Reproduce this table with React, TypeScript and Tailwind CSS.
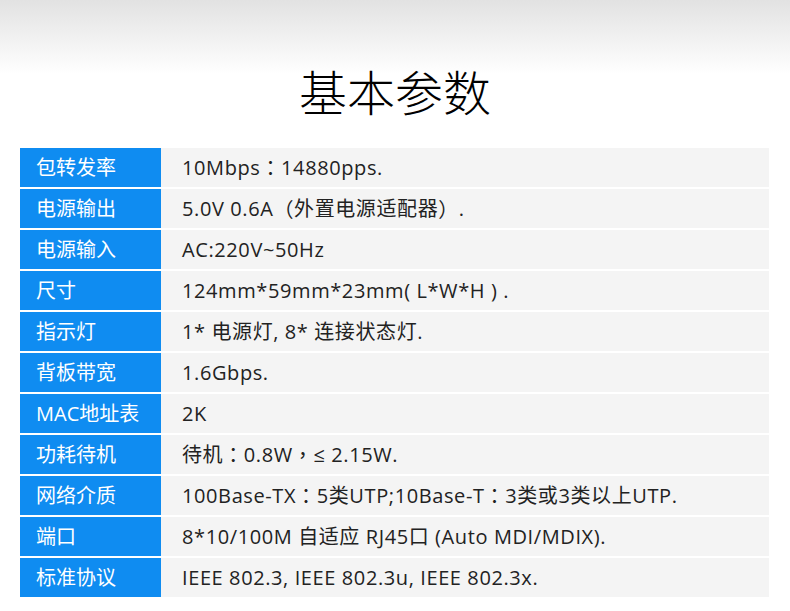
import React from "react";

const rows: [string, string][] = [
  ["包转发率", "10Mbps：14880pps."],
  ["电源输出", "5.0V 0.6A（外置电源适配器）."],
  ["电源输入", "AC:220V~50Hz"],
  ["尺寸", "124mm*59mm*23mm( L*W*H ) ."],
  ["指示灯", "1* 电源灯, 8* 连接状态灯."],
  ["背板带宽", "1.6Gbps."],
  ["MAC地址表", "2K"],
  ["功耗待机", "待机：0.8W，≤ 2.15W."],
  ["网络介质", "100Base-TX：5类UTP;10Base-T：3类或3类以上UTP."],
  ["端口", "8*10/100M 自适应 RJ45口 (Auto MDI/MDIX)."],
  ["标准协议", "IEEE 802.3, IEEE 802.3u, IEEE 802.3x."],
];

function Value({ text }: { text: string }) {
  const parts = text.split(/([：（），])/);
  return (
    <>
      {parts.map((p, i) =>
        /^[：（），]$/.test(p) ? (
          <span key={i} style={{ fontFamily: '"Noto Sans CJK TC", sans-serif' }}>
            {p}
          </span>
        ) : (
          <span key={i}>{p}</span>
        )
      )}
    </>
  );
}

export default function App() {
  return (
    <div
      className="w-[790px] h-[611px] bg-white overflow-hidden"
      style={{ fontFamily: '"Open Sans", "Noto Sans CJK SC", sans-serif' }}
    >
      <div className="h-[148px] bg-gradient-to-b from-[#e2e2e2] via-white via-[50%] to-white flex justify-center pt-[58px]">
        <h1
          className="text-[48px] leading-[64px] font-light text-black"
          style={{ fontFamily: '"Noto Sans CJK SC", sans-serif' }}
        >
          基本参数
        </h1>
      </div>
      <div className="mx-[20px] w-[749px] flex flex-col gap-[2px]">
        {rows.map(([k, v]) => (
          <div key={k} className="flex h-[39px]">
            <div className="w-[141px] bg-[#0f8cf1] text-white text-[20px] pl-[16px] flex items-center">
              {k}
            </div>
            <div className="flex-1 bg-[#f4f4f4] text-[#222] text-[20px] tracking-[0.6px] pl-[21px] flex items-center whitespace-pre">
              <Value text={v} />
            </div>
          </div>
        ))}
      </div>
    </div>
  );
}
